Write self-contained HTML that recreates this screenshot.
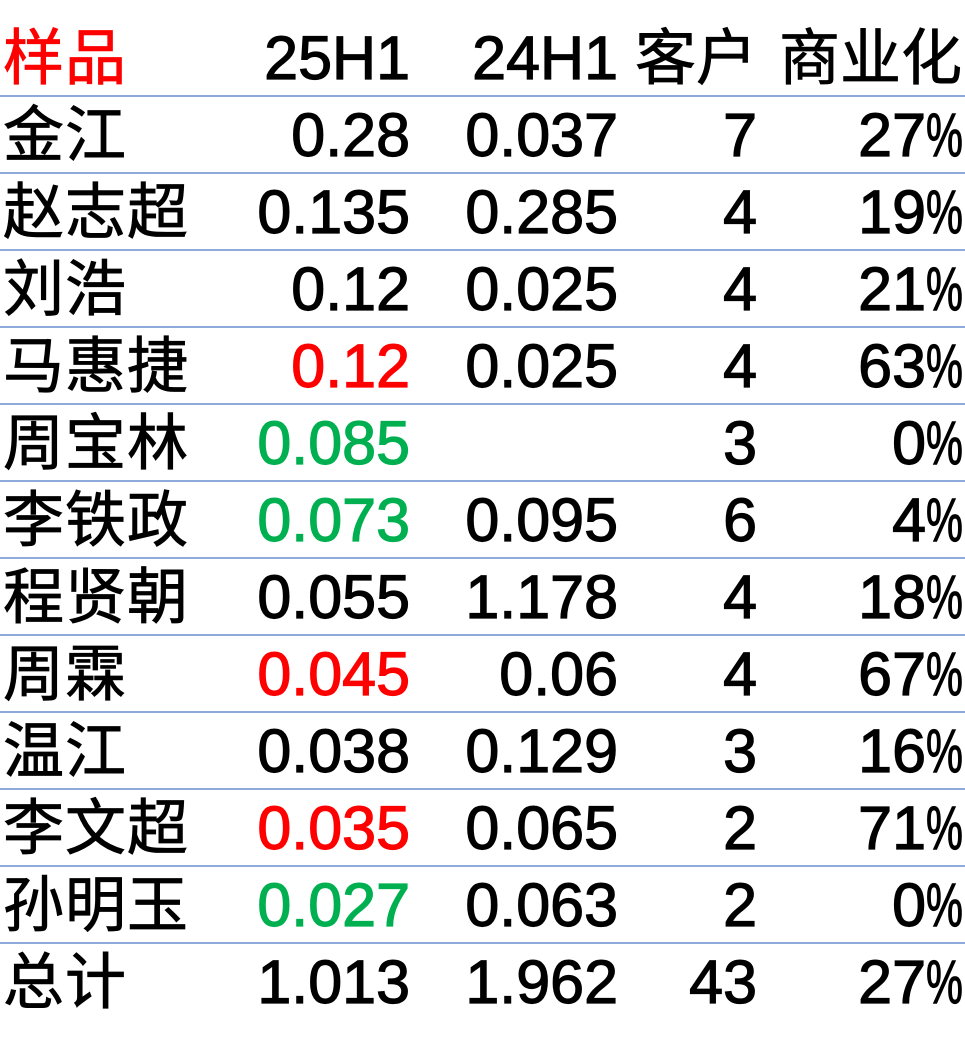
<!DOCTYPE html>
<html><head><meta charset="utf-8"><style>
html,body{margin:0;padding:0;background:#fff;width:965px;height:1060px;overflow:hidden}
.r{position:absolute;left:0;width:965px;height:77px}
.r::after{content:"";position:absolute;left:0;right:0;top:75px;height:2px;background:#8eaadb}
.r.last::after{display:none}
.c{position:absolute;top:0;line-height:77px;height:77px;font-family:"Liberation Sans","Noto Sans CJK SC",sans-serif;font-size:61px;font-weight:normal;-webkit-text-stroke:1.2px currentColor;color:#000;white-space:nowrap}
.n{left:3px;font-size:61px;letter-spacing:1px;-webkit-text-stroke:0.8px currentColor}
.a{right:555px;text-align:right}
.b{right:347px;text-align:right}
.k{right:208px;text-align:right}
.p{right:2px;text-align:right}
.h .p{right:3px;-webkit-text-stroke:0.8px currentColor}
.h .k{-webkit-text-stroke:0.8px currentColor}
.pc{display:inline-block;width:37px;transform:scaleX(.68);transform-origin:left}
.red{color:#ff0000}.grn{color:#00b050}
</style></head><body>
<div class="r h" style="top:20px"><span class="c n red">样品</span><span class="c a">25H1</span><span class="c b">24H1</span><span class="c k">客户</span><span class="c p">商业化</span></div>
<div class="r" style="top:97px"><span class="c n">金江</span><span class="c a">0.28</span><span class="c b">0.037</span><span class="c k">7</span><span class="c p">27<span class="pc">%</span></span></div>
<div class="r" style="top:174px"><span class="c n">赵志超</span><span class="c a">0.135</span><span class="c b">0.285</span><span class="c k">4</span><span class="c p">19<span class="pc">%</span></span></div>
<div class="r" style="top:251px"><span class="c n">刘浩</span><span class="c a">0.12</span><span class="c b">0.025</span><span class="c k">4</span><span class="c p">21<span class="pc">%</span></span></div>
<div class="r" style="top:328px"><span class="c n">马惠捷</span><span class="c a red">0.12</span><span class="c b">0.025</span><span class="c k">4</span><span class="c p">63<span class="pc">%</span></span></div>
<div class="r" style="top:405px"><span class="c n">周宝林</span><span class="c a grn">0.085</span><span class="c k">3</span><span class="c p">0<span class="pc">%</span></span></div>
<div class="r" style="top:482px"><span class="c n">李铁政</span><span class="c a grn">0.073</span><span class="c b">0.095</span><span class="c k">6</span><span class="c p">4<span class="pc">%</span></span></div>
<div class="r" style="top:559px"><span class="c n">程贤朝</span><span class="c a">0.055</span><span class="c b">1.178</span><span class="c k">4</span><span class="c p">18<span class="pc">%</span></span></div>
<div class="r" style="top:636px"><span class="c n">周霖</span><span class="c a red">0.045</span><span class="c b">0.06</span><span class="c k">4</span><span class="c p">67<span class="pc">%</span></span></div>
<div class="r" style="top:713px"><span class="c n">温江</span><span class="c a">0.038</span><span class="c b">0.129</span><span class="c k">3</span><span class="c p">16<span class="pc">%</span></span></div>
<div class="r" style="top:790px"><span class="c n">李文超</span><span class="c a red">0.035</span><span class="c b">0.065</span><span class="c k">2</span><span class="c p">71<span class="pc">%</span></span></div>
<div class="r" style="top:867px"><span class="c n">孙明玉</span><span class="c a grn">0.027</span><span class="c b">0.063</span><span class="c k">2</span><span class="c p">0<span class="pc">%</span></span></div>
<div class="r last" style="top:944px"><span class="c n">总计</span><span class="c a">1.013</span><span class="c b">1.962</span><span class="c k">43</span><span class="c p">27<span class="pc">%</span></span></div>
</body></html>
